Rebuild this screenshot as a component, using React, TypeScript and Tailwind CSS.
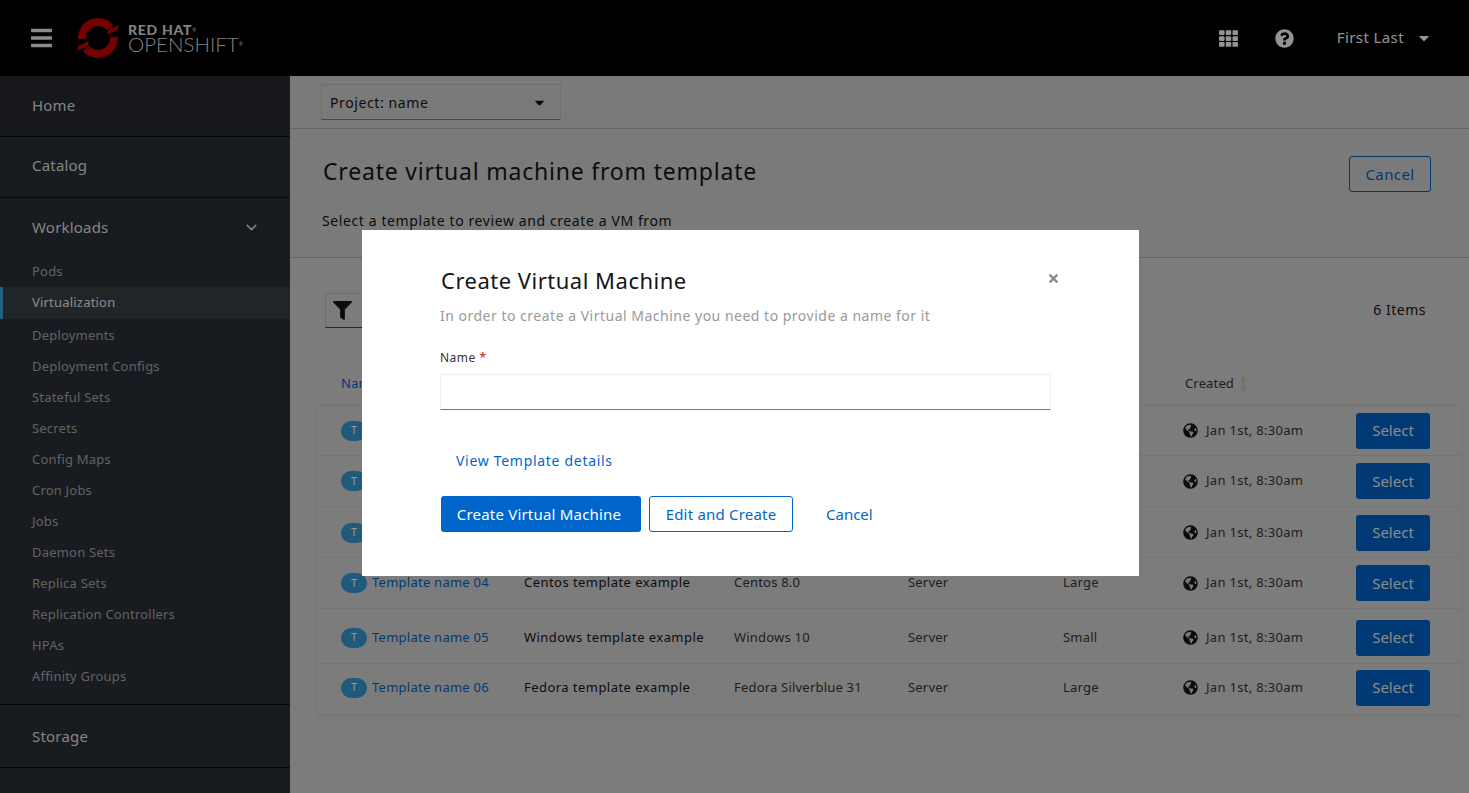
import { FaBars, FaCaretDown, FaFilter, FaGlobeAmericas, FaQuestionCircle, FaTh, FaTimes } from "react-icons/fa";
import { LuChevronDown } from "react-icons/lu";

const navItems = [
  "Pods",
  "Virtualization",
  "Deployments",
  "Deployment Configs",
  "Stateful Sets",
  "Secrets",
  "Config Maps",
  "Cron Jobs",
  "Jobs",
  "Daemon Sets",
  "Replica Sets",
  "Replication Controllers",
  "HPAs",
  "Affinity Groups",
];

const rows = [
  { name: "Template name 01", desc: "Fedora template example", os: "Fedora 31", load: "Server", size: "Small", h: "h-[50px]" },
  { name: "Template name 02", desc: "Centos template example", os: "Centos 7.0", load: "Server", size: "Large", h: "h-[51px]" },
  { name: "Template name 03", desc: "Windows template example", os: "Windows 10", load: "Server", size: "Small", h: "h-[51px] pt-[1px]" },
  { name: "Template name 04", desc: "Centos template example", os: "Centos 8.0", load: "Server", size: "Large", h: "h-[51px]" },
  { name: "Template name 05", desc: "Windows template example", os: "Windows 10", load: "Server", size: "Small", h: "h-[55px] pt-[3px]" },
  { name: "Template name 06", desc: "Fedora template example", os: "Fedora Silverblue 31", load: "Server", size: "Large", h: "h-[51px] pb-[3px]" },
];

function Logo() {
  return (
    <div className="ml-[25px] flex items-center">
      <svg width="42" height="40" viewBox="0 0 42 40" fill="none">
        <path d="M5 21A16 16 0 0 1 33 9.5" stroke="#c40000" strokeWidth="8" />
        <path d="M37 19A16 16 0 0 1 9 30.5" stroke="#c40000" strokeWidth="8" />
        <path d="M31 12 42 7l-1 5-11 5zM11 28 0 33l1-5 11-5z" fill="#c40000" />
      </svg>
      <div className="-mt-[1px] ml-[9px] flex flex-col font-['Lato',sans-serif] text-[#d8d8d8]">
        <span className="h-[14px] text-[14px] leading-[14px] font-black tracking-[0.7px]">
          RED HAT<span className="align-top text-[5px] font-normal">®</span>
        </span>
        <span className="h-[15px] text-[20.5px] leading-[15px] font-light">
          OPENSHIFT<span className="align-top text-[5px] font-normal">®</span>
        </span>
      </div>
    </div>
  );
}

function Header() {
  return (
    <header className="flex h-[76px] items-center bg-black pl-[31px] text-[#f5f5f5]">
      <FaBars className="h-[24px] w-[21px] text-[#e8e8e8]" />
      <Logo />
      <div className="ml-auto flex items-center pr-[38px]">
        <FaTh className="h-[19px] w-[19px]" />
        <FaQuestionCircle className="ml-[37px] h-[19px] w-[19px]" />
        <span className="ml-[43px] pb-[1px] text-[15px] tracking-[0.4px]">First Last</span>
        <FaCaretDown className="ml-[13px] h-[16px] w-[14px]" />
      </div>
    </header>
  );
}

function Sidebar() {
  return (
    <aside className="w-[290px] shrink-0 bg-[#292e34] text-[#dcdcdc] tracking-[0.2px]">
      <div className="flex h-[61px] items-center border-b border-[#0b0c0e] bg-[#26292d] pb-[2px] pl-[32px] text-[15px]">Home</div>
      <div className="flex h-[61px] items-center border-b border-[#0b0c0e] pb-[3px] pl-[32px] text-[15px]">Catalog</div>
      <div className="h-[507px] border-b border-[#0b0c0e]">
        <div className="flex h-[58px] items-center justify-between pr-[30px] pl-[32px] text-[15px]">
          Workloads
          <LuChevronDown className="h-[17px] w-[17px]" />
        </div>
        <ul className="text-[13px] text-[#a4a4a4]">
          {navItems.map((item) =>
            item === "Virtualization" ? (
              <li key={item} className="mb-[1px] flex h-[32px] items-center border-l-[3px] border-[#39a5dc] bg-[#393f44] pl-[29px] text-[#e4e4e4]">
                {item}
              </li>
            ) : (
              <li key={item} className="flex h-[31px] items-center pl-[32px]">
                {item}
              </li>
            ),
          )}
        </ul>
      </div>
      <div className="flex h-[63px] items-center border-b border-[#0b0c0e] pl-[32px] text-[15px]">Storage</div>
    </aside>
  );
}

function Content() {
  return (
    <main className="min-w-0 flex-1 bg-[#cfcfcf] text-[#151515]">
      <div className="flex h-[53px] items-center border-b border-[#a8a8a8] bg-[#cbcbcb] pl-[31px]">
        <div className="flex h-[36px] w-[240px] items-center justify-between border border-b-[#777] border-[#bbb] pr-[14px] pl-[8px] text-[14px] tracking-[0.6px]">
          Project: name
          <FaCaretDown className="h-[15px] w-[13px]" />
        </div>
      </div>
      <div className="flex h-[129px] flex-col border-b border-[#a8a8a8] bg-[#cbcbcb] pl-[33px]">
        <div className="flex items-start justify-between pt-[27px] pr-[38px]">
          <h1 className="-mt-[1px] text-[23px] leading-[32px] tracking-[0.8px]">Create virtual machine from template</h1>
          <button className="h-[36px] w-[82px] rounded-[3px] border border-[#005fc0] text-[15px] tracking-[0.4px] text-[#005fc0]">Cancel</button>
        </div>
        <p className="mt-[19px] -ml-[1px] text-[14px] leading-[20px] tracking-[0.6px]">Select a template to review and create a VM from</p>
      </div>
      <div className="flex h-[35px] items-start justify-between pt-[35px] pl-[35px]">
        <div className="flex h-[35px] w-[60px] shrink-0 items-center border border-b-[#444] border-[#b5b5b5] pl-[7px]">
          <FaFilter className="h-[19px] w-[19px]" />
        </div>
        <span className="mt-[6px] mr-[43px] text-[14px] tracking-[0.5px]">6 Items</span>
      </div>
      <div className="mt-[60px] pl-[27px]">
        <div className="ml-[24px] flex h-[61px] items-center text-[13px] tracking-[0.15px]">
          <span className="w-[844px] text-[#005fc0]">Name</span>
          <span className="flex items-center gap-[6px] text-[#333]">
            Created
            <svg width="7" height="14" viewBox="0 0 7 14" fill="#bbb">
              <path d="M3.5 0 7 3.5H4.5v7H7L3.5 14 0 10.5h2.5v-7H0z" />
            </svg>
          </span>
        </div>
        <div className="w-[1144px] -mt-[9px] border-b border-[#c2c2c2] shadow-[0_1px_3px_rgba(0,0,0,0.08)]">
          {rows.map((row) => (
            <div
              key={row.name}
              className={`grid ${row.h} grid-cols-[183px_210px_174px_155px_120px_173px_74px] items-center border-t border-[#c2c2c2] pl-[24px] text-[13px]`}
            >
              <div className="flex items-center">
                <span className="flex h-[20px] w-[26px] items-center justify-center rounded-full bg-[#3596cc] text-[10px] text-white">T</span>
                <span className="ml-[5px] tracking-[0.25px] text-[#005fc0]">{row.name}</span>
              </div>
              <span className="tracking-[0.45px]">{row.desc}</span>
              <span className="tracking-[0.2px] text-[#333]">{row.os}</span>
              <span className="tracking-[0.2px] text-[#333]">{row.load}</span>
              <span className="tracking-[0.2px] text-[#333]">{row.size}</span>
              <span className="flex items-center tracking-[0.3px] text-[#333]">
                <FaGlobeAmericas className="mr-[8px] h-[15px] w-[15px] text-[#151515]" />
                Jan 1st, 8:30am
              </span>
              <button className="h-[36px] w-[74px] rounded-[3px] bg-[#005fc0] text-[15px] text-[#e8e8e8]">Select</button>
            </div>
          ))}
        </div>
      </div>
    </main>
  );
}

function Modal() {
  return (
    <div className="absolute top-[230px] left-[362px] h-[346px] w-[777px] bg-white pt-[35px] pl-[78px] text-[#151515]">
      <FaTimes className="absolute top-[42px] right-[80px] h-[13px] w-[11px] text-[#8a8d90]" />
      <h2 className="-mt-[1px] ml-[1px] text-[22px] leading-[32px] tracking-[0.5px]">Create Virtual Machine</h2>
      <p className="mt-[10px] text-[14px] leading-[20px] tracking-[0.5px] text-[#999]">In order to create a Virtual Machine you need to provide a name for it</p>
      <label className="mt-[23px] block text-[12px] leading-[18px] tracking-[0.5px] text-[#333]">
        Name <span className="text-[#c9190b]">*</span>
      </label>
      <div className="mt-[7px] h-[36px] w-[611px] border border-b-[#72767b] border-[#ededed]" />
      <a className="mt-[40px] ml-[16px] block text-[14px] leading-[22px] tracking-[0.7px] text-[#0066cc]">View Template details</a>
      <div className="mt-[24px] ml-[1px] flex items-center">
        <button className="h-[36px] w-[200px] rounded-[3px] bg-[#0066cc] pr-[4px] text-[15px] tracking-[0.2px] text-white">Create Virtual Machine</button>
        <button className="ml-[8px] h-[36px] w-[144px] rounded-[3px] border border-[#0066cc] text-[15px] tracking-[0.2px] text-[#0066cc]">Edit and Create</button>
        <button className="ml-[33px] text-[15px] text-[#0066cc]">Cancel</button>
      </div>
    </div>
  );
}

export default function App() {
  return (
    <div className="relative flex h-[793px] w-full flex-col overflow-hidden font-['Noto_Sans',sans-serif]">
      <Header />
      <div className="flex min-h-0 flex-1">
        <Sidebar />
        <Content />
      </div>
      <div className="absolute inset-0 bg-black/40" />
      <Modal />
    </div>
  );
}
